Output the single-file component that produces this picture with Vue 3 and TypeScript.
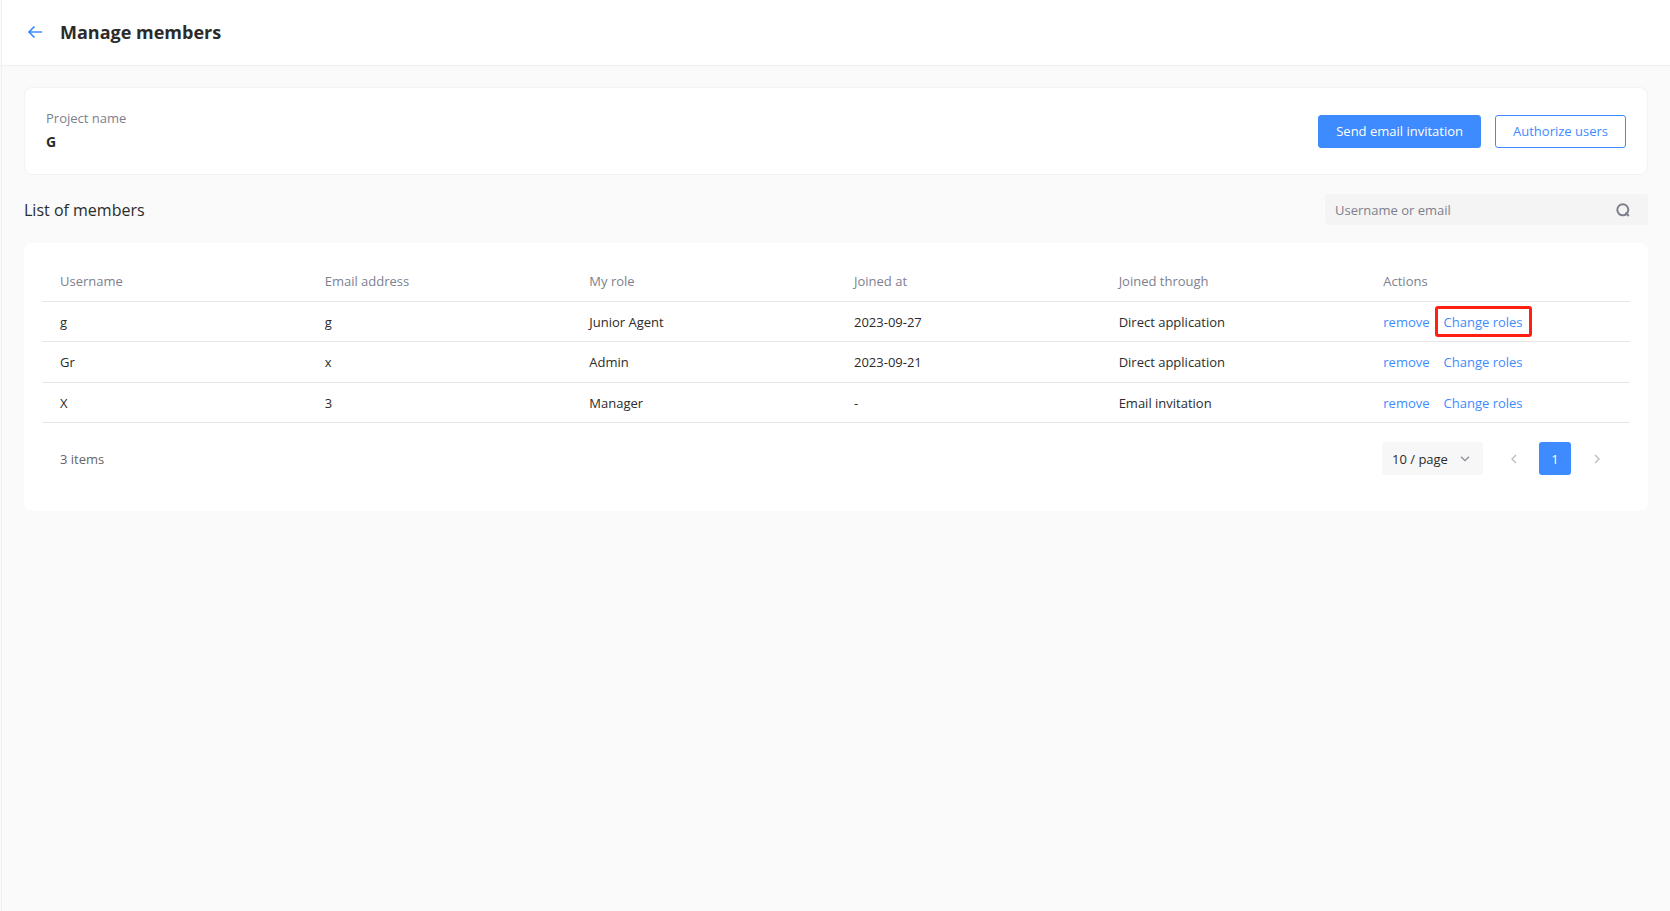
<script setup lang="ts">
import { ref } from 'vue'

interface Member {
  username: string
  email: string
  role: string
  joinedAt: string
  joinedThrough: string
  highlighted?: boolean
}

const columns: string[] = ['Username', 'Email address', 'My role', 'Joined at', 'Joined through', 'Actions']

const members: Member[] = [
  { username: 'g', email: 'g', role: 'Junior Agent', joinedAt: '2023-09-27', joinedThrough: 'Direct application', highlighted: true },
  { username: 'Gr', email: 'x', role: 'Admin', joinedAt: '2023-09-21', joinedThrough: 'Direct application' },
  { username: 'X', email: '3', role: 'Manager', joinedAt: '-', joinedThrough: 'Email invitation' },
]

const query = ref('')
const pageSize = ref(10)
</script>

<template>
  <div class="page">
    <header class="header">
      <button class="back" type="button" aria-label="Back">
        <svg width="14" height="12" viewBox="0 0 14 12" fill="none" stroke="currentColor" stroke-width="1.6">
          <path d="M14 6H1M6.500 0.500L1 6l5.500 5.500" />
        </svg>
      </button>
      <h1>Manage members</h1>
    </header>

    <main class="content">
      <section class="card project">
        <div>
          <div class="label">Project name</div>
          <div class="name">G</div>
        </div>
        <div class="buttons">
          <button class="btn primary" type="button">Send email invitation</button>
          <button class="btn outline" type="button">Authorize users</button>
        </div>
      </section>

      <div class="list-head">
        <h2>List of members</h2>
        <div class="search">
          <input v-model="query" type="text" placeholder="Username or email" aria-label="Username or email" />
          <button type="button" aria-label="Search">
            <svg width="14" height="14" viewBox="0 0 14 14" fill="none" stroke="currentColor" stroke-width="2">
              <circle cx="6.800" cy="6.800" r="5.500" />
              <path d="M9.500 9.500L12.800 13" />
            </svg>
          </button>
        </div>
      </div>

      <section class="card list">
        <table>
          <thead>
            <tr>
              <th v-for="column in columns" :key="column" scope="col">{{ column }}</th>
            </tr>
          </thead>
          <tbody>
            <tr v-for="member in members" :key="member.username">
              <td>{{ member.username }}</td>
              <td>{{ member.email }}</td>
              <td>{{ member.role }}</td>
              <td>{{ member.joinedAt }}</td>
              <td>{{ member.joinedThrough }}</td>
              <td>
                <div class="actions">
                  <button class="link" type="button">remove</button>
                  <button class="link" :class="{ highlighted: member.highlighted }" type="button">Change roles</button>
                </div>
              </td>
            </tr>
          </tbody>
        </table>

        <footer class="footer">
          <span class="total">{{ members.length }} items</span>
          <nav class="pager" aria-label="Pagination">
            <div class="size">
              <select v-model="pageSize" aria-label="Items per page">
                <option :value="10">10 / page</option>
                <option :value="20">20 / page</option>
                <option :value="50">50 / page</option>
              </select>
              <svg width="10" height="6" viewBox="0 0 10 6" fill="none" stroke="currentColor" stroke-width="1.300">
                <path d="M1 0.700l4 4 4-4" />
              </svg>
            </div>
            <button class="arrow" type="button" aria-label="Previous page">
              <svg width="6" height="10" viewBox="0 0 6 10" fill="none" stroke="currentColor" stroke-width="1.300">
                <path d="M5 1L1 5l4 4" />
              </svg>
            </button>
            <button class="current" type="button" aria-current="page">1</button>
            <button class="arrow" type="button" aria-label="Next page">
              <svg width="6" height="10" viewBox="0 0 6 10" fill="none" stroke="currentColor" stroke-width="1.300">
                <path d="M1 1l4 4-4 4" />
              </svg>
            </button>
          </nav>
        </footer>
      </section>
    </main>
  </div>
</template>

<style>
body {
  margin: 0;
  background: #fafafa;
}
</style>

<style scoped>
.page {
  box-sizing: border-box;
  min-height: 100vh;
  margin-left: 1px;
  border-left: 1px solid #f0f0f0;
  background: #fafafa;
  color: #2b2b2b;
  font: 13px/20px "Segoe UI", "Open Sans", "Noto Sans", sans-serif;
}

button,
input,
select {
  margin: 0;
  padding: 0;
  border: 0;
  background: none;
  color: inherit;
  font: inherit;
}

button {
  cursor: pointer;
}

svg {
  display: block;
}

.header {
  display: flex;
  align-items: center;
  gap: 18px;
  height: 63px;
  padding: 0 26px 2px;
  border-bottom: 1px solid #f0f0f0;
  background: #fff;
}

.back {
  color: #3e8bff;
}

h1 {
  margin: 0;
  font-size: 18px;
  font-weight: 700;
  line-height: 24px;
}

.content {
  padding: 21px 22px;
}

.card {
  border-radius: 8px;
  background: #fff;
}

.project {
  display: flex;
  align-items: flex-start;
  justify-content: space-between;
  padding: 20px 21px 22px;
  border: 1px solid #f3f3f5;
}

.label {
  color: #7d7f8e;
}

.name {
  margin-top: 4px;
  font-size: 14px;
  font-weight: 700;
}

.buttons {
  display: flex;
  gap: 14px;
  margin-top: 7px;
}

.btn {
  box-sizing: border-box;
  height: 33px;
  padding: 0 17px 1px;
  border: 1px solid #3e8bff;
  border-radius: 3px;
}

.primary {
  background: #3e8bff;
  color: #fff;
}

.outline {
  background: #fff;
  color: #3e8bff;
}

.list-head {
  display: flex;
  align-items: center;
  justify-content: space-between;
  margin: 19px 0 18px;
}

h2 {
  margin: 0;
  font-size: 16px;
  font-weight: 400;
  line-height: 24px;
}

.search {
  display: flex;
  align-items: center;
  box-sizing: border-box;
  width: 323px;
  height: 31px;
  padding: 0 18px 0 10px;
  border-radius: 3px;
  background: #f4f4f4;
  color: #7d7f8e;
}

.search input {
  flex: 1;
  min-width: 0;
  outline: none;
}

.search input::placeholder {
  color: #7d7f8e;
  opacity: 1;
}

.list {
  padding: 18px 18px 36px;
}

table {
  width: 100%;
  border-collapse: separate;
  border-spacing: 0;
  table-layout: fixed;
}

th,
td {
  box-sizing: border-box;
  height: 40px;
  padding: 0 18px;
  border-bottom: 1px solid #e6e6e6;
  font-weight: 400;
  text-align: left;
  white-space: nowrap;
}

th,
tr:nth-child(even) td {
  height: 41px;
}

th {
  color: #7d7f8e;
}

.actions {
  display: flex;
  gap: 14px;
}

.link {
  position: relative;
  color: #3e8bff;
}

.highlighted::after {
  content: "";
  position: absolute;
  inset: -6px -9px -5px;
  border: 3px solid #ff2012;
  border-radius: 3px;
}

.footer {
  display: flex;
  align-items: center;
  justify-content: space-between;
  margin-top: 19px;
  padding: 0 18px;
}

.total {
  color: #666;
}

.pager {
  display: flex;
  align-items: center;
}

.size {
  position: relative;
  display: flex;
  align-items: center;
  margin-right: 15px;
}

.size select {
  width: 101px;
  height: 33px;
  padding: 0 10px;
  border-radius: 3px;
  background: #f7f7f7;
  appearance: none;
}

.size svg {
  position: absolute;
  right: 13px;
  color: #8a8c99;
  pointer-events: none;
}

.arrow {
  display: grid;
  place-items: center;
  width: 31px;
  height: 33px;
  color: #bbb;
}

.current {
  width: 32px;
  height: 33px;
  margin: 0 10px;
  border-radius: 3px;
  background: #3e8bff;
  color: #fff;
}
</style>
